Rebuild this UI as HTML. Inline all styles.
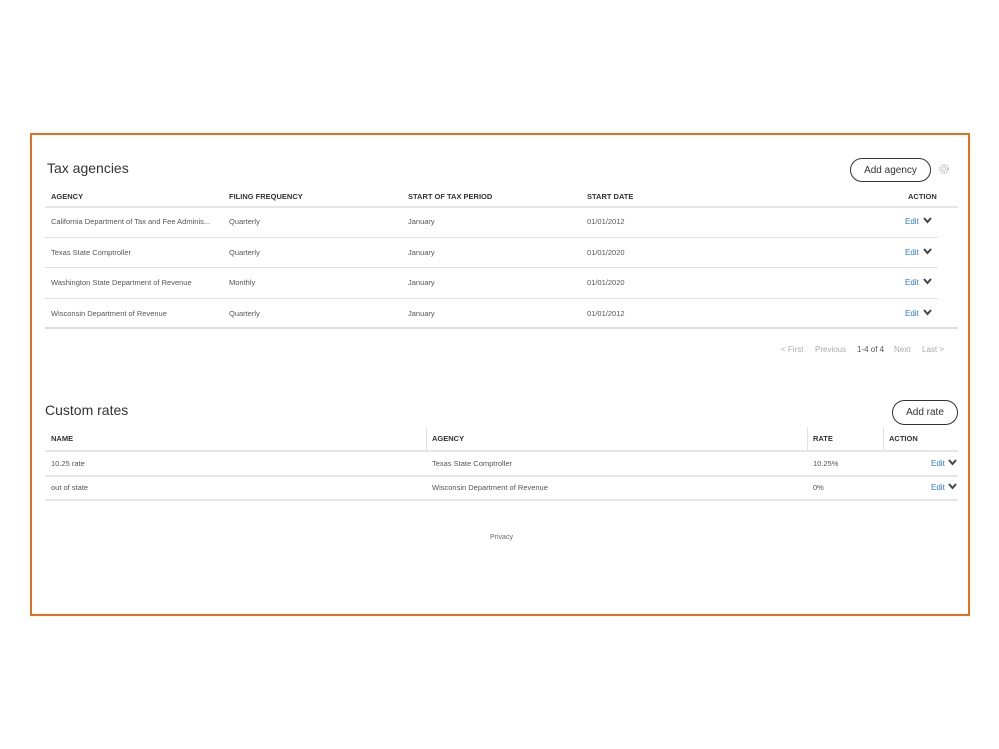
<!DOCTYPE html>
<html><head><style>
body{margin:0;width:999px;height:749px;background:#fff;font-family:"Liberation Sans",sans-serif;position:relative;overflow:hidden}
.a{position:absolute;white-space:nowrap}
.box{position:absolute;left:30px;top:133px;width:936px;height:479px;border:2px solid #e5701c}
.h{font-size:7.5px;font-weight:bold;color:#333}
.t{font-size:7.5px;color:#555}
.l{position:absolute;height:1px;background:#e3e3e3}
.e{font-size:8px;color:#2a7fc9}
.btn{position:absolute;border:1.5px solid #333;border-radius:13px;font-size:10px;color:#333;box-sizing:border-box;display:flex;align-items:center;justify-content:center}
.p{font-size:8px;color:#aaa}
</style></head><body>
<div class="box"></div>
<div class="a" style="left:47px;top:160px;font-size:14px;color:#333">Tax agencies</div>
<div class="btn" style="left:850px;top:158px;width:81px;height:24px">Add agency</div>
<svg class="a" style="left:938px;top:163px" width="12" height="12" viewBox="0 0 12 12"><circle cx="6" cy="6" r="4" fill="none" stroke="#ccc" stroke-width="2" stroke-dasharray="1.6 1"/><circle cx="6" cy="6" r="1.8" fill="none" stroke="#ccc"/></svg>
<div class="a h" style="left:51px;top:192px">AGENCY</div>
<div class="a h" style="left:229px;top:192px">FILING FREQUENCY</div>
<div class="a h" style="left:408px;top:192px">START OF TAX PERIOD</div>
<div class="a h" style="left:587px;top:192px">START DATE</div>
<div class="a h" style="left:908px;top:192px">ACTION</div>
<div class="l" style="left:45px;top:206px;width:913px;height:2px;background:#e6e6e6"></div>

<div class="a t" style="left:51px;top:217px">California Department of Tax and Fee Adminis...</div>
<div class="a t" style="left:229px;top:217px">Quarterly</div><div class="a t" style="left:408px;top:217px">January</div><div class="a t" style="left:587px;top:217px">01/01/2012</div>
<div class="l" style="left:45px;top:237px;width:893px"></div>
<div class="a t" style="left:51px;top:248px">Texas State Comptroller</div>
<div class="a t" style="left:229px;top:248px">Quarterly</div><div class="a t" style="left:408px;top:248px">January</div><div class="a t" style="left:587px;top:248px">01/01/2020</div>
<div class="l" style="left:45px;top:267px;width:893px"></div>
<div class="a t" style="left:51px;top:278px">Washington State Department of Revenue</div>
<div class="a t" style="left:229px;top:278px">Monthly</div><div class="a t" style="left:408px;top:278px">January</div><div class="a t" style="left:587px;top:278px">01/01/2020</div>
<div class="l" style="left:45px;top:298px;width:893px"></div>
<div class="a t" style="left:51px;top:309px">Wisconsin Department of Revenue</div>
<div class="a t" style="left:229px;top:309px">Quarterly</div><div class="a t" style="left:408px;top:309px">January</div><div class="a t" style="left:587px;top:309px">01/01/2012</div>
<div class="l" style="left:45px;top:327px;width:913px;height:2px;background:#ddd"></div>

<div class="a e" style="left:905px;top:217px">Edit</div>
<div class="a e" style="left:905px;top:248px">Edit</div>
<div class="a e" style="left:905px;top:278px">Edit</div>
<div class="a e" style="left:905px;top:309px">Edit</div>
<svg class="a" style="left:923px;top:217px" width="9" height="100"><g fill="none" stroke="#444" stroke-width="2"><path d="M1 1l3.5 4 3.5-4"/><path d="M1 32l3.5 4 3.5-4"/><path d="M1 62l3.5 4 3.5-4"/><path d="M1 93l3.5 4 3.5-4"/></g></svg>

<div class="a p" style="left:781px;top:345px">&lt; First</div>
<div class="a p" style="left:815px;top:345px">Previous</div>
<div class="a p" style="left:857px;top:345px;color:#555">1-4 of 4</div>
<div class="a p" style="left:894px;top:345px">Next</div>
<div class="a p" style="left:922px;top:345px">Last &gt;</div>

<div class="a" style="left:45px;top:402px;font-size:14px;color:#333">Custom rates</div>
<div class="btn" style="left:892px;top:400px;width:66px;height:25px">Add rate</div>
<div class="a h" style="left:51px;top:434px">NAME</div>
<div class="a h" style="left:432px;top:434px">AGENCY</div>
<div class="a h" style="left:813px;top:434px">RATE</div>
<div class="a h" style="left:889px;top:434px">ACTION</div>
<div class="l" style="left:426px;top:427px;width:1px;height:23px"></div>
<div class="l" style="left:807px;top:427px;width:1px;height:23px"></div>
<div class="l" style="left:883px;top:427px;width:1px;height:23px"></div>
<div class="l" style="left:45px;top:450px;width:913px;height:2px;background:#e6e6e6"></div>
<div class="a t" style="left:51px;top:459px">10.25 rate</div>
<div class="a t" style="left:432px;top:459px">Texas State Comptroller</div>
<div class="a t" style="left:813px;top:459px">10.25%</div>
<div class="a e" style="left:931px;top:459px">Edit</div>
<div class="l" style="left:45px;top:475px;width:913px;height:2px;background:#e6e6e6"></div>
<div class="a t" style="left:51px;top:483px">out of state</div>
<div class="a t" style="left:432px;top:483px">Wisconsin Department of Revenue</div>
<div class="a t" style="left:813px;top:483px">0%</div>
<div class="a e" style="left:931px;top:483px">Edit</div>
<div class="l" style="left:45px;top:499px;width:913px;height:2px;background:#e6e6e6"></div>
<svg class="a" style="left:948px;top:459px" width="9" height="34"><g fill="none" stroke="#444" stroke-width="2"><path d="M1 1l3.5 4 3.5-4"/><path d="M1 25l3.5 4 3.5-4"/></g></svg>
<div class="a" style="left:490px;top:534px;font-size:7px;color:#666">Privacy</div>
</body></html>
